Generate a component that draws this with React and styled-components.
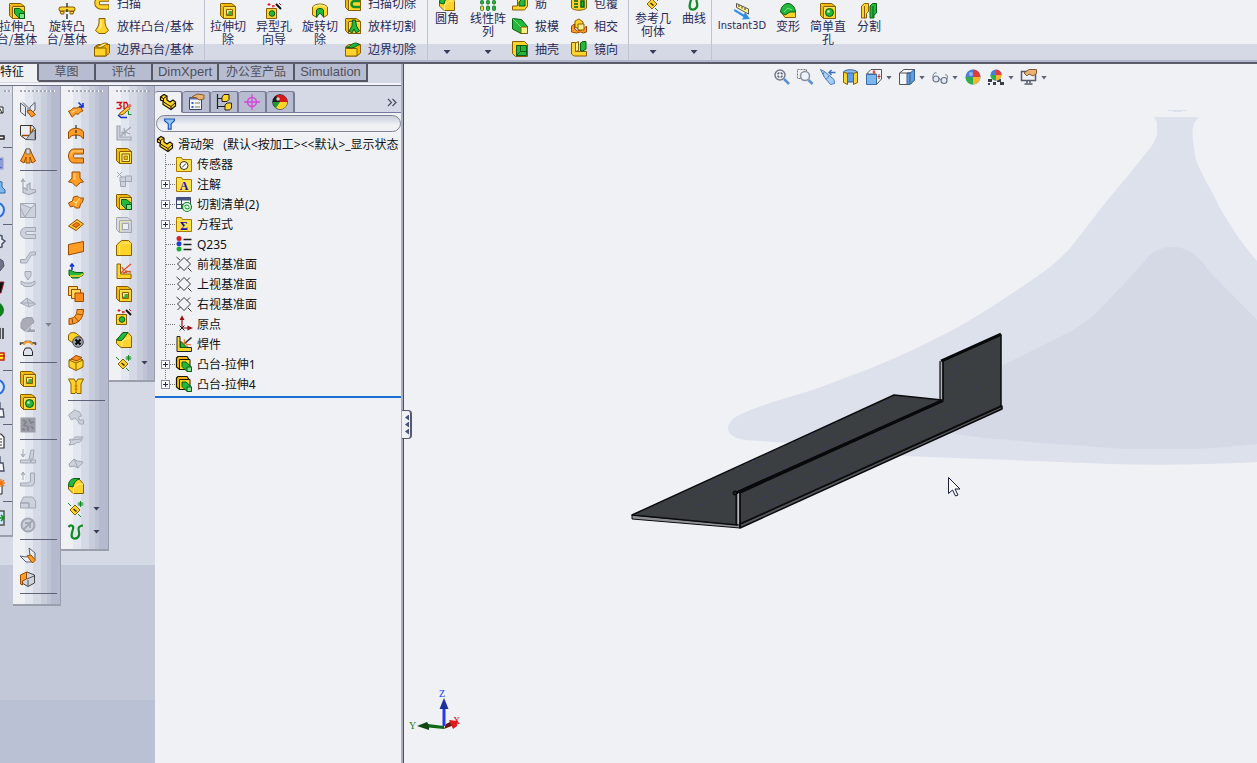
import React, { useState } from 'react';
import styled, { createGlobalStyle, css } from 'styled-components';

// ================= ICONS =================

const Y = '#ffd42a';
const YL = '#fff08a';
const YD = '#f2b705';
const YS = '#8a5e00';
const O = '#ff9d26';
const OL = '#ffc46a';
const OS = '#9a4b00';
const G = '#22b83a';
const GL = '#7fe08a';
const GS = '#0a5c18';
const GR = '#cdd1dc';
const GRS = '#a3a7b4';

const plate = (inner, fill = Y, side = YD, stroke = YS) => (
  <>
    <path d="M.5.5h11l4 3v12h-12l-3-3z" fill={side} stroke={stroke} />
    <path d="M3.500 3.500h12v12h-12z" fill={fill} stroke={stroke} />
    <path d="M.5.5l3 3M4.500 14.500v-10h10" fill="none" stroke={YL} strokeWidth=".8" opacity=".8" />
    {inner}
  </>
);

const icons = {
  boss: plate(
    <>
      <path d="M5.500 5.500h5l5 4v6h-5l-5-5z" fill={G} stroke={GS} />
      <path d="M10.500 10.500h5v5h-5z" fill={GL} stroke={GS} />
    </>
  ),
  revolve: (
    <>
      <path d="M2 6h12" stroke={YS} strokeWidth="5" strokeLinecap="round" />
      <path d="M2 6h12" stroke={Y} strokeWidth="3" strokeLinecap="round" />
      <path d="M1 8.500h4V11H2zM11 8.500h4L14 11h-3z" fill={Y} stroke={YS} />
      <path d="M8 0v4M8 6v3M8 11v5" stroke="#111" strokeWidth="1.200" />
    </>
  ),
  sweep: (
    <>
      <path d="M15 4H7a4 4 0 000 8h8" fill="none" stroke={YS} strokeWidth="5.500" />
      <path d="M14.500 4H7a4 4 0 000 8h7.500" fill="none" stroke={Y} strokeWidth="3.500" />
      <path d="M14 3.500H7" fill="none" stroke={YL} />
    </>
  ),
  loft: (
    <>
      <path d="M5 .5h6V5l1 3.500 2.500 4L11 15.500H5L1.500 12.500 4 8.500 5 5z" fill={Y} stroke={YS} />
      <path d="M7 2v5l-2 5" stroke={YL} strokeWidth="1.500" fill="none" />
    </>
  ),
  boundary: (
    <>
      <path d="M.5 6L4 3.500h11.500V12L12 15H.5z" fill={YD} stroke={YS} />
      <path d="M.5 7H12v8H.5z" fill={Y} stroke={YS} />
      <path d="M2 5c4 1 5-3 10-3l2 1c-4 1-4 3-9 4z" fill={YL} stroke={YS} />
    </>
  ),
  cut: plate(
    <>
      <path d="M6.500 6.500h6v6h-6z" fill={YL} stroke={YS} />
      <path d="M8.500 8h3.500v4H7v-1.500h1.500z" fill="#3fae3a" />
    </>
  ),
  wizard: (
    <>
      <path d="M.5 5.500h10V15.500H.5z" fill={Y} stroke={YS} />
      <circle cx="6" cy="10.500" r="2.800" fill={G} stroke={GS} />
      <path d="M10 1l5 5" stroke="#111" strokeWidth="2" />
      <path d="M3 0v3M1.500 1.500h3M7 2v2.500M6 3h3M13 0l2 2" stroke="#e01010" />
    </>
  ),
  revCut: (
    <>
      <path d="M.5 4c3-4 12-4 15 0v8l-4 2.500V9H5v5.500L.5 12z" fill={Y} stroke={YS} />
      <path d="M2 4c3-2.500 9-2.500 12 0" fill="none" stroke={YL} strokeWidth="1.500" />
      <path d="M4.500 14V7c1-2 6-2 7 0v7L8 10z" fill={G} stroke={GS} />
    </>
  ),
  sweepCut: plate(<path d="M15 6H9.500a3 3 0 000 6H15" fill="none" stroke="#0f8f26" strokeWidth="2.500" />),
  loftCut: plate(<path d="M7.500 2h3l1 6 3 5-3.500 2L9 11l-2 4-3-2 3-5z" fill={G} stroke={GS} />),
  boundCut: (
    <>
      <path d="M.5 6L4 3.500h11.500V12L12 15H.5z" fill={YD} stroke={YS} />
      <path d="M.5 7.500H12V15H.5z" fill={Y} stroke={YS} />
      <path d="M1 6c4 1 5-4 10-4l4 1.500c-4 1-4 3-9 3.500z" fill={G} stroke={GS} />
    </>
  ),
  fillet: (
    <>
      <path d="M.5 7L5 1h6l4.500 5v9.500H5L.5 11z" fill={Y} stroke={YS} />
      <path d="M.5 8C.5 3 3 .5 7 .5h5C8 2 5.500 5 5 9z" fill={G} stroke={GS} />
      <path d="M5.500 15.500V9.500L11 6h4.500" fill="none" stroke={YL} />
    </>
  ),
  pattern: (
    <g stroke={GS} strokeWidth=".7">
      {[0, 6, 12].map((x) => (
        <React.Fragment key={x}>
          <rect x={x + 0.5} y=".5" width="3" height="3.500" rx="1" fill={G} />
          <rect x={x + 0.5} y="5.500" width="3" height="3.500" rx="1" fill={G} />
          <rect x={x + 0.5} y="11" width="3" height="4.500" rx="1" fill={x === 0 ? Y : G} />
        </React.Fragment>
      ))}
    </g>
  ),
  rib: (
    <>
      <path d="M5.500 1h10v10l-3 4H.5v-4h5z" fill={Y} stroke={YS} />
      <path d="M7 11V7l6-6v10z" fill={G} stroke={GS} />
    </>
  ),
  draft: (
    <>
      <path d="M.5.5l9 1 6 7v7H9L.5 11z" fill={G} stroke={GS} />
      <path d="M.5.500L9 9" stroke={GL} />
      <path d="M9 9h6.500v6.500H9z" fill={YL} stroke={YS} />
    </>
  ),
  shell: (
    <>
      <path d="M.5.5h12l3 3v12H3.500l-3-3z" fill={Y} stroke={YS} />
      <path d="M4.500 4.500h10v10h-10z" fill={G} stroke={GS} />
      <path d="M4.500 14.500l4-4v-6M8.500 10.500h6" stroke={GS} fill="none" />
    </>
  ),
  wrap: (
    <>
      <path d="M.5 3c3-3 12-3 15 0v10c-3 3-12 3-15 0z" fill={Y} stroke={YS} />
      <path d="M3 6h4M3 9h4M3 12h4M10 6v6h3V6z" stroke={GS} strokeWidth="1.500" fill={G} />
    </>
  ),
  intersect: (
    <>
      <path d="M4 3l4-2 4 3v5l-4 2-4-2z" fill={Y} stroke={YS} />
      <path d="M.5 8l3-2v5l3 2 6-2 3-3v6l-3 1-3-1-4 1-5-1z" fill={O} stroke={OS} />
      <path d="M7 6h6v6H7z" fill={YL} stroke={YS} />
    </>
  ),
  mirror: (
    <>
      <path d="M.5 1.500h4v9h11v4.500H3L.5 13z" fill={Y} stroke={YS} />
      <path d="M4.500 2l3-1.500v9l-3 1z" fill={YL} stroke={YS} />
      <path d="M9.500 2L12 .5h3V8l-3 2H9.500z" fill={G} stroke={GS} />
    </>
  ),
  refGeom: (
    <>
      <path d="M7 4l5 5-5 5-5-5z" fill={Y} stroke={YS} />
      <path d="M0 2l3 3M10 13l3 3M12.500 0v6M9.500 3h6M10.500 1l4 4M14.500 1l-4 4" stroke="#158a25" />
      <path d="M5.500 8l3 2.500" stroke="#3a2a00" strokeWidth="1.500" />
    </>
  ),
  curve: (
    <path
      d="M.5 3C3 0 6 2 5 5S2 14 6 14.500s6-3 5-6.500-1-6 4-6.500"
      fill="none"
      stroke="#0f8a25"
      strokeWidth="2.200"
    />
  ),
  instant: (
    <>
      <path d="M2.500.5l12 5.500v5L2.500 4.500z" fill={YL} stroke="#333" strokeWidth=".8" />
      <path d="M5 2v2M8 3.500v2M11 5v2" stroke="#333" />
      <path d="M.5 6l9.500 5.500 1-2.500 5 7-8 .5 1.500-2.500L0 8z" fill="#2f8fe8" />
    </>
  ),
  deform: (
    <>
      <path d="M.5 8.500h15v6H5z" fill={Y} stroke={YS} />
      <path d="M.5 9C1 3 5 .5 8 .5S15 3 15.500 9H10l-5 3z" fill={G} stroke={GS} />
      <path d="M4 9l4-4 4 2" fill="none" stroke={GL} />
    </>
  ),
  hole: plate(
    <>
      <circle cx="9.500" cy="9.500" r="4" fill={G} stroke={GS} />
      <circle cx="8.500" cy="8.500" r="1.300" fill="#d5f5c8" />
    </>
  ),
  split: (
    <>
      <path d="M.5 3l3-2.500h4v8l-2 2V15H.5z" fill={Y} stroke={YS} />
      <path d="M3.500 3v12" stroke={YS} />
      <path d="M9 3l2.500-2.500h4V10L13 12v3H9z" fill={G} stroke={GS} />
      <path d="M12 3v11" stroke={GS} />
    </>
  ),

  // weldment and sheet metal rail
  sketchBend: (
    <>
      <path d="M.5 1l5 4v9l-5-4zM15 .5L10 5v7l5-4z" fill="#e8eaf0" stroke="#555a66" />
      <path d="M3 .5l5 5v6" stroke="#555a66" fill="none" />
      <path d="M7 9l4-1 4.500 4.500-4 2.500z" fill={O} stroke={OS} />
    </>
  ),
  convert: (
    <>
      <path d="M.5.5h12l3 4v10H6l-5.500-4z" fill="#eceef3" stroke="#333" />
      <path d="M2 10.500h8.500V1M10.500 10.500l3-7" stroke={OS} strokeWidth="1.500" fill="none" />
      <path d="M11 8l4-3v10L6 14.500z" fill="#b9bdca" stroke="#555" strokeWidth=".8" />
    </>
  ),
  lofted: (
    <>
      <path d="M6 1h4l2 5 3.500 7-3.500 2-2-6V15l-4 0V9l-2 6-3.500-2L4 6z" fill={O} stroke={OS} />
      <path d="M6 1h4v5H6z" fill="#d6d9e2" stroke="#666" strokeWidth=".8" />
    </>
  ),
  gFlange: <path d="M3 0v10M1 3l2-3 2 3M3 8l4 3V6l3-2v6l5.500 1v2L9 15.500l-6-2z" fill={GR} stroke={GRS} strokeWidth="1.200" />,
  gMiter: <path d="M.5 1.500h15v14H5L.5 6zM.5 6v9.500h4M.5 1.500L11 6l4.500-4M4.500 15.500L11 6" fill={GR} stroke={GRS} />,
  gHem: <path d="M15.500 2.500H6a5 5 0 000 11h9.500v-4H7a1.500 1.500 0 010-3h8.500z" fill={GR} stroke={GRS} />,
  gJog: <path d="M.5 11.500h5l5-7.500h5v3h-4l-5 8H.5z" fill={GR} stroke={GRS} />,
  gBend: <path d="M5 .5h6v4L8 9 5 4.500zM1 10l4 2h6l4-2v3l-4 2.500H5L1 13z" fill={GR} stroke={GRS} />,
  gFold: <path d="M.5 9L7 4l8.500 6-6.500 3zM7 4l2 9M.5 9h14" fill={GR} stroke={GRS} />,
  gBreak: (
    <>
      <path d="M3 2l4-1.500h5L14 5l-8 10-5-4V6z" fill="#a9acb6" stroke="#9a9da9" />
      <path d="M5 15.500L13 7l-2 5h4.500v3.500z" fill="#9fa2ad" stroke="#e0e2ea" />
    </>
  ),
  forming: (
    <>
      <path d="M.5 5V3h4l1-1.500h5l1 1.500h4v2" fill="none" stroke="#444" strokeWidth="1.500" />
      <path d="M4 5c0-4 8-4 8 0" fill="none" stroke={O} strokeWidth="2" />
      <path d="M5.500 8h5l2 3.500v4h-9v-4z" fill="#dfe2ea" stroke="#222" />
    </>
  ),
  gVent: (
    <>
      <path d="M.5.5h15v15H.5z" fill="#9b9da6" />
      <path d="M3 3l3 2-2 3 3 1M9 2l2 4 3-1M8 9v5M11 9l3 3M2 12l3 1" stroke="#7e808a" strokeWidth="1.500" fill="none" />
    </>
  ),
  gUnfold: <path d="M3 1v8M1 6l2 3 2-3M.5 12h10v3H.5zM9 11l2-9h3l-1 9zM11 12h4.500v3H11z" fill={GR} stroke={GRS} />,
  gRefold: <path d="M3 9V1M1 4l2-3 2 3M.5 12h8l2-2V2h4v10l-2 3H.5z" fill={GR} stroke={GRS} />,
  gFlat: <path d="M.5 9l3-6h9l3 4v7H9V9zM.5 9H9v5H.5z" fill={GR} stroke={GRS} />,
  gNoBend: (
    <>
      <circle cx="8" cy="8" r="6.500" fill={GR} stroke={GRS} strokeWidth="2" />
      <path d="M3.500 12.500l9-9M5 6h5v5" stroke={GRS} strokeWidth="1.800" fill="none" />
    </>
  ),
  rip: (
    <>
      <path d="M9 0l1 7-4 2-6-1 6 6h5l4-3V5z" fill="#eceef3" stroke="#5a5e6a" />
      <path d="M7 8l4-1 4.500 5-3 3z" fill={O} stroke={OS} />
    </>
  ),
  insBend: (
    <>
      <path d="M2 5l5-4 7.500 3v8L8 15.500 2 12z" fill="#cfd3de" stroke="#444" />
      <path d="M.5 4l6-3v7l-4 2v4l-2-1z" fill={O} stroke={OS} />
      <path d="M7 8l7-3M8 15V9" stroke="#555" />
    </>
  ),

  // surface rail
  sExtrude: (
    <>
      <path d="M.5 9C4 9 4 5 7 6s4-2 5-2l3 5c-4 0-3 4-6 3s-3 3-5 3z" fill={O} stroke={OS} />
      <path d="M3 10.500c3 0 3-3 6-2.500" stroke={OL} strokeWidth="1.500" />
      <path d="M10.500.5l4 4M15 1v4h-4" stroke="#1030d0" strokeWidth="1.500" />
    </>
  ),
  sRevolve: (
    <>
      <path d="M.5 14V7c3-5 12-5 15 0v7c-2-3-4-4-7.500-4S2.500 11 .5 14z" fill={O} stroke={OS} />
      <path d="M8 0v3M8 5v3M8 10v4" stroke="#111" />
    </>
  ),
  sSweep: (
    <>
      <path d="M15.500 1H6C3 1 .5 4 .5 8S3 15 6 15h9.500v-5H7c-2 0-2-4 0-4h8.500z" fill={O} stroke={OS} />
      <path d="M15 3H6.500C4 3 3 5 3 8" fill="none" stroke={OL} strokeWidth="1.500" />
    </>
  ),
  sLoft: (
    <>
      <path d="M4 1h8v6l3.500 4-3 .5L8 15.500 4 11.500.5 11 4 7z" fill={O} stroke={OS} />
      <path d="M6.500 2v7" stroke={OL} strokeWidth="2" />
    </>
  ),
  sBoundary: (
    <>
      <path d="M.5 9l4-2 1-4 4-1 2 2h4l-1 4-2 2-1 4-4 0-2-2-3 1z" fill={O} stroke={OS} />
      <path d="M5 7l3 2 4-5M7 12l2-3" stroke={YL} />
    </>
  ),
  sFill: (
    <>
      <path d="M9 2.500L15.500 7 8 13.500.5 9z" fill="#ffc640" stroke={OS} />
      <path d="M8.500 5.500L12 7.500 8 10.500 4.500 8.500z" fill="#ff7a00" stroke={OS} />
    </>
  ),
  sPlanar: <path d="M.5 4.500l15-3v10l-15 3.500z" fill={O} stroke={OS} />,
  sOffset: (
    <>
      <path d="M1 12V7c3 0 4 2.500 8 2.500h6V12l-5 3H4z" fill={G} stroke={GS} />
      <path d="M2 13h10l3-2" stroke={Y} strokeWidth="1.500" />
      <path d="M4 7V1M2 3.500L4 1l2 2.500" stroke="#1030d0" strokeWidth="1.500" fill="none" />
    </>
  ),
  sRuled: (
    <>
      <path d="M.5.5h9v9h-9z" fill="#ffd85a" stroke={OS} />
      <path d="M3.500 3.500h9v9h-9z" fill="#ffd85a" stroke={OS} />
      <path d="M7 7h8.500v8.500H7z" fill="#ff8a1e" stroke={OS} />
    </>
  ),
  sElbow: (
    <>
      <path d="M9 .5h6.500C15.500 9 11 15 1 15.500v-6c5 0 8-3 8-9z" fill={O} stroke={OS} />
      <path d="M9 5l6 1M7 8l4 5M4 9.500l1 5.500" stroke={OS} />
    </>
  ),
  sDelete: (
    <>
      <path d="M.5 4C1-.5 7 0 9 2l5 4-6 7L.5 8z" fill={Y} stroke={YS} />
      <circle cx="10" cy="10" r="5.300" fill="#9c9faa" stroke="#444" />
      <path d="M7.500 7.500l5 5M12.500 7.500l-5 5" stroke="#000" strokeWidth="2" />
    </>
  ),
  sReplace: (
    <>
      <path d="M1 5l7-3 7 3v7l-7 3.500L1 12z" fill={Y} stroke={YS} />
      <path d="M1 5l7 3 7-3M8 8v7" stroke={YS} fill="none" />
      <path d="M3 4l5-3.500 6 2L9 6z" fill="#ff8a1e" stroke={OS} />
    </>
  ),
  sUntrim: (
    <>
      <path d="M.5 1h5.500l2 3 2-3h5.500l-2.500 5v9.500h-4L8 14l-1 1.500H3V6z" fill={Y} stroke={YS} />
      <path d="M8 4v10M6.500 8h3M6.500 11h3" stroke="#c06000" />
    </>
  ),
  gExtend: <path d="M.5 6l6-5 5 2 2 4-3 1 1 3h4v4h-4l-2-4-3-2-3 2z" fill={GR} stroke={GRS} />,
  gTrim: <path d="M1 8c3-2 4 1 6-3l8 0-2 4c-2 3-4 0-6 3l-6 1 2-4zM4 8l9-1" fill={GR} stroke={GRS} />,
  gKnit: <path d="M1 9l5-5 3 2 6 1-5 6-4-2-4 1zM6 4l4 9" fill={GR} stroke={GRS} />,

  // 3D rail
  sk3d: (
    <>
      <path d="M.5.500h5L3.500 3l2 1.500-1.500 2H.5M8 .5v6h2l2-3-1.500-3z" fill="none" stroke="#d01010" strokeWidth="1.300" />
      <path d="M4 11l8-6.500 2 2L7 12.500l-4 .5z" fill="#ffc640" stroke={YS} />
      <path d="M12.500 4.500l2.500-1.500" stroke="#e07060" strokeWidth="3" />
      <path d="M2 13l3 2.500h6" stroke="#1030d0" strokeWidth="1.500" fill="none" />
      <path d="M12 12.500h3.500M12.500 9v4" stroke="#109020" />
    </>
  ),
  gWeld: <path d="M1 1h3v11h11v3H1zM5 11l4-4 6-5M8 3l1 4-4 1M9 7l5 2M9 7v4" fill={GR} stroke={GRS} strokeWidth="1.200" />,
  member: plate(
    <>
      <path d="M6 6h7.500v7.500H6z" fill={YL} stroke={YS} />
      <path d="M8 8h3.500v3.500H8z" fill={YD} stroke={YS} strokeWidth=".7" />
    </>
  ),
  gTrimEx: <path d="M1 1l5 5M6 1L1 6M4 6h5.500v4.500H4zM9.500 5h6v5.500h-6zM4.500 10.500h5v5h-5z" fill={GR} stroke={GRS} />,
  gCap: plate(<path d="M6.500 6.500h6v6h-6z" fill="#eceef3" stroke={GRS} />, GR, '#d9dce5', GRS),
  gusset: (
    <>
      <path d="M.5 5l5-4.500h7l3 3v12H.5z" fill={Y} stroke={YS} />
      <path d="M3.500 15V6l3-3h8" stroke={YL} fill="none" />
    </>
  ),
  weldBead: (
    <>
      <path d="M1 1h3.500v10H15v4.500H1z" fill={Y} stroke={YS} />
      <path d="M5 10l4-4 6-5M6 4l2 4M9 8l6 1M7 10l4-1" stroke="#e05020" strokeWidth="1.300" />
    </>
  ),
  chamfer: (
    <>
      <path d="M.5 8L7 .5h5l3.500 4v11H5l-4.500-4z" fill={Y} stroke={YS} />
      <path d="M.5 8L7 .5h5L6 8.500z" fill={G} stroke={GS} />
      <path d="M6 9l6-3h3M6 9v6" stroke={YL} fill="none" />
    </>
  ),

  // clipped outer rail
  sphere: <circle cx="8" cy="8" r="7" fill="#d5e6fb" stroke="#2b6fd6" strokeWidth="2" />,
  mesh: <path d="M1 5h13v6H1zM4 5l3 6M10 5l3 6M7 11l3-6" fill="#fff" stroke="#222" />,
  bar: <path d="M0 11h15v3H0" fill="#fff" stroke="#222" strokeWidth="1.500" />,
  monitor: <path d="M1 2h13v11H1zM12 4v7" fill="#4a68d8" stroke="#a5aed2" strokeWidth="1.500" />,
  user: <path d="M8 2l5 1v5l3 3v3H2v-3z" fill="#7fb6ee" stroke="#2d6aa8" />,
  gear: <path d="M8 1l5 2v3l3 2-3 3v3l-5 1-5-2V4z" fill="#e8eaf2" stroke="#4a4e66" strokeWidth="1.500" />,
  dark: <path d="M8 1l6 4 1 5-4 5H4z" fill="#707288" stroke="#55576a" />,
  blade: <path d="M2 3h13l-3 11H4z" fill="#111" stroke="#a02030" />,
  leaf: <circle cx="7.500" cy="8" r="7.500" fill="#0e8020" />,
  mark: <path d="M3 14V3l4 8 4-8v11M14 3v11" fill="none" stroke="#111" strokeWidth="1.300" />,
  yellow: <path d="M1 5h14v7H1zM8 8h8" fill="#ffee22" stroke="#c02010" strokeWidth="1.400" />,
  printer: <path d="M5 1h6v6h3l1 8H2V7h3z" fill="#f4f5f9" stroke="#4a4e66" strokeWidth="1.300" />,
  doc: <path d="M3 1h9l3 3v11H3zM5 6h8M5 9h8M5 12h8" fill="#fff" stroke="#333" strokeWidth="1.200" />,
  spark: (
    <>
      <path d="M3 5h10v10H3z" fill="#fff" stroke="#222" />
      <path d="M12 0v8M8 4h8M9 1l6 6M15 1L9 7" stroke="#f07a10" strokeWidth="1.400" />
    </>
  ),
  greenDoc: (
    <>
      <path d="M3 1h12v14H3z" fill="#cfe8f8" stroke="#555" strokeWidth="1.500" />
      <path d="M9 8h6M12 5l3 3-3 3" stroke="#109020" strokeWidth="1.500" fill="none" />
    </>
  ),

  // feature manager
  part: (
    <>
      <path d="M.5 3L4 .5l3 1.500v4l3 2 3-2 2.500 2v4L11 15.500l-8-5V7L.5 6z" fill={Y} stroke="#1a1400" strokeWidth="1.200" />
      <path d="M.5 3l3 1.500L7 2M3.500 4.500V8l7.500 4.500 4.500-4M11 12.500v3" fill="none" stroke="#1a1400" />
    </>
  ),
  props: (
    <>
      <path d="M1.500 3.500h12v12h-12z" fill="#f5f6fa" stroke="#3b4468" />
      <path d="M1.500 3.500h12v2h-12z" fill="#5d6fae" />
      <path d="M3.500 8h2v2h-2zM3.500 12h2v2h-2z" fill="#3a5fc0" />
      <path d="M7 9h5M7 13h5" stroke="#777" />
      <path d="M4 3l5-3 7 1v4l-5 1-2-2z" fill="#e7b375" stroke="#8c5a28" />
    </>
  ),
  config: (
    <>
      <path d="M1.500 0v15M1.500 4.500H7M1.500 12.500H9" stroke="#222" strokeWidth="1.200" />
      <path d="M6 3l2-2.500h5v5l-2 2H6zM9 11l2-2h4.500v5l-2 2H9z" fill={Y} stroke="#222" />
    </>
  ),
  dimx: (
    <>
      <circle cx="8" cy="8" r="4.500" fill="none" stroke="#d24bd8" strokeWidth="1.500" />
      <path d="M8 0v16M0 8h16" stroke="#d24bd8" strokeWidth="1.300" />
    </>
  ),
  ball: (
    <>
      <circle cx="8" cy="8" r="7.300" fill="#2a48b8" stroke="#333" />
      <path d="M8 8V.7A7.300 7.300 0 00.7 8z" fill="#1a1a1a" />
      <path d="M8 8L4 1.800A7.300 7.300 0 018 .7a7.300 7.300 0 017.300 7.300z" fill="#d81818" />
      <path d="M8 8H.8A7.300 7.300 0 008 15.300z" fill="#1c9a34" />
      <path d="M8 8h7.300A7.300 7.300 0 018 15.300L4 14z" fill="#ffd42a" />
      <circle cx="6" cy="5" r="1.800" fill="#fff" opacity=".75" />
    </>
  ),
  funnel: (
    <path d="M2 2.500h12v2L10 8.500V15H6.500V8.500L2 4.500z" fill="#8fc4f5" stroke="#1a50b8" strokeWidth="1.400" />
  ),
  sensor: (
    <>
      <path d="M.5 3.500V1.500h5l1 2h9v12H.5z" fill="#ffe14a" stroke="#a87800" />
      <circle cx="8" cy="9.500" r="4" fill="#fff" stroke="#333" />
      <path d="M6 11.500l4-4" stroke="#333" />
    </>
  ),
  cutlist: (
    <>
      <path d="M.5 1.500h14v11H.5z" fill="#f5f6fa" stroke="#3b4468" />
      <path d="M.5 1.500h14v3H.5z" fill="#45557f" />
      <path d="M.5 8.500h14M5.500 4v8" stroke="#3b4468" />
      <circle cx="11" cy="11" r="4.500" fill="#dff5df" stroke="#0f8a25" strokeWidth="1.200" />
      <path d="M8.500 10.500c1-2 3-2 4.500 0M13.500 11.500c-1 2-3 2-4.500 0" fill="none" stroke="#0f8a25" strokeWidth="1.200" />
    </>
  ),
  material: (
    <>
      <circle cx="3" cy="2.500" r="2.500" fill="#d82020" />
      <circle cx="3" cy="7.800" r="2.500" fill="#2040d0" />
      <circle cx="3" cy="13" r="2.500" fill="#18b030" />
      <path d="M7.500 3.500h8M7.500 8.500h8M7.500 13.500h8" stroke="#222" strokeWidth="1.500" />
    </>
  ),
  plane: (
    <path d="M8 1.500l6.500 6.500L8 14.500 1.500 8zM.5 1l3.500 3M12 12l3.500 3.500M11 4.500L14 1.500M4.500 11l-3 3" fill="none" stroke="#222" strokeWidth=".9" />
  ),
  origin: (
    <>
      <path d="M6 12V2M6 12h8M4.500 3.500L6 .5l1.500 3zM12 10.500l3.500 1.500-3.500 1.500z" stroke="#a01010" fill="#a01010" strokeWidth="1.200" />
      <path d="M3.500 9.500l5 5M8.500 9.500l-5 5" stroke="#222" />
    </>
  ),
  weldment: (
    <>
      <path d="M1 .5h3v11h11.500v4H1z" fill={Y} stroke="#222" />
      <path d="M4.500 5l6.500 6.500H4.500z" fill={G} stroke={GS} />
      <path d="M8 8l7.500-6.500" stroke="#222" strokeWidth="1.500" />
      <path d="M8 3l1 4M15 9l-5-1M6 6l3 2M12 11l-2-3" stroke="#f07020" />
    </>
  ),
  extrude: (
    <>
      <path d="M.5 2L2 .5h9L13 3.500v10H3.500L.5 11z" fill={YD} stroke="#1a1400" strokeWidth="1.200" />
      <path d="M3.500 3.500H14v10H3.500z" fill={Y} stroke="#1a1400" />
      <path d="M6 6h4l5.500 5v4.500H11L6 10.500z" fill={G} stroke={GS} />
      <path d="M11 11h4.500v4.500H11z" fill={GL} stroke={GS} />
    </>
  ),

  // view toolbar
  zoomFit: (
    <>
      <circle cx="6" cy="6" r="5" fill="#eef3fb" stroke="#777b88" strokeWidth="1.500" />
      <path d="M4 5.500V4h1.500M6.500 4H8v1.500M8 6.500V8H6.500M5.500 8H4V6.500" stroke="#333" fill="none" />
      <path d="M10 10l5 5" stroke="#5b8fd0" strokeWidth="2.500" />
    </>
  ),
  zoomArea: (
    <>
      <path d="M.5.5h9v9h-9z" fill="none" stroke="#777" strokeDasharray="2 1" />
      <circle cx="8" cy="7" r="4.500" fill="#eef3fb" stroke="#8a8e9a" strokeWidth="1.500" />
      <path d="M11.500 11l4 4" stroke="#5b8fd0" strokeWidth="2.500" />
    </>
  ),
  prevView: (
    <>
      <path d="M.5.5l4 2L14 10.500l.5 4-4 1-6-7z" fill="#a9cdf2" stroke="#4a7cb8" />
      <path d="M4.500 2.500l-1.500 3M9 7l-3 3.500" stroke="#4a7cb8" />
      <path d="M15.500 3.500H9M11.500 1L9 3.500 11.500 6" stroke="#3a6fc0" strokeWidth="1.400" fill="none" />
    </>
  ),
  section: (
    <>
      <path d="M.5 3c2-3 11-3 14 0l-3 2H4z" fill="#8fbdf0" stroke="#34629c" />
      <path d="M4.500 4h6v9h-6z" fill="#5f9ee6" stroke="#34629c" />
      <path d="M.5 3l4 1.500v11l-4-2zM10.500 4.500l4-1.500v10.500l-4 2z" fill={Y} stroke={YS} />
    </>
  ),
  orient: (
    <>
      <path d="M5 .5h10.500V10l-5 5.500V5H.5z" fill="#f4f6fa" stroke="#555" />
      <path d="M.5 5.500h10v10H.5z" fill="#7db5ee" stroke="#3a6ca8" />
      <path d="M8 1v4M13 5v5M11.500 7.500h3M6.500 3h3" stroke="#d02020" />
    </>
  ),
  display: (
    <>
      <path d="M.5 4L5 .5h10.500V11L11 15.500H.5z" fill="#f4f6fa" stroke="#555" />
      <path d="M8 4h3l4.500-3.500V11L11 15.500H8z" fill="#5f9ee6" stroke="#34629c" />
      <path d="M.5 4H11v11" fill="none" stroke="#555" />
    </>
  ),
  glasses: (
    <>
      <circle cx="4" cy="10" r="3" fill="#dfe9f6" stroke="#6b7385" strokeWidth="1.200" />
      <circle cx="12" cy="11.500" r="3" fill="#dfe9f6" stroke="#6b7385" strokeWidth="1.200" />
      <path d="M7 9.500l2 1M1 9C.5 5 3 3 4.500 4M15 10c1-3 0-5-2-4" stroke="#6b7385" fill="none" />
    </>
  ),
  appearance: (
    <>
      <circle cx="8" cy="8" r="7.500" fill="#4a7fd8" />
      <path d="M8 8V.5A7.500 7.500 0 0115.500 8z" fill="#e03c3c" />
      <path d="M8 8h7.500A7.500 7.500 0 018 15.500z" fill="#f5b52e" />
      <path d="M8 8v7.500A7.500 7.500 0 01.5 8z" fill="#2eae4c" />
      <circle cx="6" cy="5" r="2" fill="#fff" opacity=".45" />
    </>
  ),
  scene: (
    <>
      <path d="M0 10h4v3H0zM5 13h3v3H5zM9 10h4v3H9zM12 13h4v3h-4zM0 14h2v2H0z" fill="#3a3d4a" />
      <circle cx="8" cy="6" r="5.500" fill="#4a7fd8" />
      <path d="M8 6V.5A5.500 5.500 0 0113.500 6z" fill="#e03c3c" />
      <path d="M8 6h5.500A5.500 5.500 0 018 11.500z" fill="#f5b52e" />
      <path d="M8 6v5.500A5.500 5.500 0 012.500 6z" fill="#2eae4c" />
    </>
  ),
  viewSet: (
    <>
      <path d="M.5 2.500h14v9H.5z" fill="#eef1f7" stroke="#555a68" strokeWidth="1.500" />
      <path d="M6 12v2M9 12v2M3.500 15h8" stroke="#555a68" strokeWidth="1.500" />
      <path d="M3 4l5-3.500h7.500v4L12 7l-4-2-2 2z" fill="#e7b375" stroke="#8c5a28" />
    </>
  ),
};

const folderWith = (letter) => (
  <>
    <path d="M.5 3.500V1.500h5l1 2h9v12H.5z" fill="#ffe14a" stroke="#a87800" />
    <text x="8" y="14" textAnchor="middle" fontFamily="Liberation Serif, serif" fontWeight="bold" fontSize="12" fill="#1515a8">
      {letter}
    </text>
  </>
);
icons.annotation = folderWith('A');
icons.equation = folderWith('Σ');

const IconSvg = styled.svg`
  display: block;
  flex: none;
  width: 16px;
  height: 16px;
  overflow: visible;
`;

const Icon = ({ name }) => (
  <IconSvg viewBox="0 0 16 16" fill="none" aria-hidden="true">
    {icons[name]}
  </IconSvg>
);

// ================= STYLES =================

const GlobalStyle = createGlobalStyle`
  * { box-sizing: border-box; }
  html, body, #root { height: 100%; }
  body {
    margin: 0;
    overflow: hidden;
    font-family: "Noto Sans", "Noto Sans CJK SC", sans-serif;
    font-size: 12px;
    color: #111;
    background: #eff1f5;
  }
  button {
    margin: 0;
    padding: 0;
    border: 0;
    background: none;
    color: inherit;
    font: inherit;
  }
`;

const Window = styled.div`
  display: flex;
  flex-direction: column;
  height: 100vh;
`;

const Ribbon = styled.header`
  display: flex;
  flex: none;
  height: 64px;
  overflow: hidden;
  border-bottom: 2px solid #5a5c6a;
  background: linear-gradient(#eff1f5 44px, #d5d9e5 44px, #d5d9e5 60px, #b2b8cc 60px);
  color: #2a2a58;
`;

const Group = styled.div`
  display: flex;
  flex: none;
  height: 60px;

  & + & {
    border-left: 1px solid #c0c4d0;
  }

  &:first-child {
    margin-left: -8px;
  }
`;

const Command = styled.button`
  display: flex;
  flex-direction: column;
  align-items: center;
  width: ${(p) => p.$width}px;
  padding-top: 3px;

  ${(p) =>
    p.$split &&
    css`
      height: 65px;
      margin-top: -5px;
      padding-top: 0;
      padding-bottom: 6px;
    `}
`;

const CommandLabel = styled.span`
  line-height: 13px;
  white-space: pre;
  text-align: center;
  font-family: ${(p) => (p.$latin ? '"DejaVu Sans Condensed", "DejaVu Sans"' : '"Noto Sans CJK SC"')}, sans-serif;
  font-size: ${(p) => (p.$latin ? 11 : 12)}px;
`;

const Arrow = styled.span`
  width: 7px;
  height: 4px;
  background: ${(p) => p.$color || '#3a3c5c'};
  clip-path: polygon(0 0, 100% 0, 50% 100%);
`;

const CommandArrow = styled(Arrow)`
  margin-top: auto;
`;

const Stack = styled.div`
  width: ${(p) => p.$width}px;
  margin-top: -9px;
  padding-left: 2px;
`;

const StackCommand = styled.button`
  display: flex;
  align-items: center;
  gap: 7px;
  height: 23px;
  font-family: "Noto Sans CJK SC", sans-serif;
  white-space: nowrap;
`;

const Body = styled.div`
  display: flex;
  flex: 1;
  min-height: 0;
`;

const SidePane = styled.aside`
  display: flex;
  flex-direction: column;
  flex: none;
  width: 401px;
  background: #d5d9e5;
`;

const Tabs = styled.nav`
  display: flex;
  flex: none;
  height: 22px;
  padding-bottom: 4px;
  border-bottom: 1px solid #6d7082;
  background: linear-gradient(#d5d9e5 19px, #f4f5f8 19px);
`;

const Tab = styled.button`
  width: ${(p) => p.$width}px;
  height: 18px;
  border: solid #565863;
  border-width: 0 2px 2px 0;
  background: #b7bcd0;
  color: #4e505c;
  line-height: 16px;
  font-family: "Liberation Sans", "Noto Sans CJK SC", sans-serif;
  font-size: ${(p) => (p.$latin ? 13 : 12)}px;

  ${(p) =>
    p.$active &&
    css`
      padding-right: 16px;
      border-bottom-color: #eff1f5;
      background: #eff1f5;
      color: #111;
      white-space: nowrap;
    `}
`;

const Workspace = styled.div`
  display: flex;
  align-items: flex-start;
  flex: 1;
  min-height: 0;
  background: linear-gradient(#d5d9e5 479px, #c3c8d9 479px, #c3c8d9 614px, #bbc1d4 614px);
`;

const Rail = styled.div`
  display: flex;
  flex-direction: column;
  flex: none;
  align-items: flex-start;
  width: ${(p) => p.$width}px;
  padding: 3px 0 6px 7px;
  border-right: 1px solid #9b9eab;
  border-bottom: 2px solid #9b9eab;
  background: linear-gradient(
    90deg,
    #eff1f5 12px,
    #e2e6ee 12px,
    #e2e6ee 20px,
    #d5d9e5 20px,
    #d5d9e5 28px,
    #c8cddc 28px,
    #c8cddc 34px,
    #bec3d5 34px,
    #bec3d5 38px,
    #b5bacf 38px
  );

  ${(p) =>
    p.$clipped &&
    css`
      align-items: flex-end;
      padding-left: 0;
      overflow: hidden;
      background: #d5d9e5;
    `}
`;

const Grip = styled.div`
  flex: none;
  width: calc(100% - 4px);
  height: 9px;
  background: repeating-linear-gradient(90deg, #a3a7b8 0 2px, #f6f7fa 2px 3px, transparent 3px 4px) no-repeat;
  background-size: 100% 2px;
  background-position: 0 1px;
`;

const RailRow = styled.div`
  display: flex;
  flex: none;
  align-items: center;
  gap: 9px;
  height: 23px;
  ${(p) => p.$clipped && 'padding-right: 7px;'}
`;

const RailRule = styled.hr`
  flex: none;
  width: calc(100% - 3px);
  height: 1px;
  margin: 3px 0 4px;
  border: 0;
  background: #5f6278;
`;

const Manager = styled.section`
  display: flex;
  flex: 1;
  flex-direction: column;
  align-self: stretch;
  min-width: 0;
  background: #eff1f5;
`;

const ManagerTabs = styled.div`
  display: flex;
  align-items: flex-end;
  flex: none;
  height: 27px;
  background: linear-gradient(#d5d9e5 26px, #7377a0 26px);
`;

const ManagerTab = styled.button`
  display: flex;
  align-items: center;
  justify-content: center;
  width: 28px;
  height: 22px;
  border: solid #777b96;
  border-width: 1px 2px 1px 0;
  border-radius: 3px 3px 0 0;
  background: #b7bcd0;

  ${(p) =>
    p.$active &&
    css`
      border-bottom-color: #eff1f5;
      background: #eff1f5;
    `}
`;

const MoreButton = styled.button`
  height: 22px;
  margin-left: auto;
  padding-right: 4px;
`;

const Filter = styled.label`
  display: flex;
  align-items: center;
  flex: none;
  gap: 4px;
  height: 17px;
  margin: 2px 0 2px 1px;
  padding-left: 6px;
  border: 1px solid #7f8398;
  border-radius: 9px;
  background: linear-gradient(#c9cedd, #eff1f5 60%);
  overflow: hidden;
`;

const FilterIcon = styled.span`
  display: flex;
  flex: none;
`;

const FilterInput = styled.input`
  flex: 1;
  min-width: 0;
  height: 13px;
  padding: 0;
  border: 0;
  outline: 0;
  background: transparent;
  font: inherit;
`;

const Tree = styled.ul`
  flex: none;
  margin: 0;
  padding: 0;
  list-style: none;
  overflow: hidden;
  border-bottom: 2px solid #1c6fd8;
`;

const RootRow = styled.li`
  display: flex;
  align-items: center;
  gap: 5px;
  height: 20px;
  padding-left: 2px;
  white-space: nowrap;
`;

const TreeRow = styled.li`
  display: grid;
  grid-template-columns: 21px 16px 1fr;
  align-items: center;
  height: 20px;
  white-space: nowrap;

  &:last-child {
    height: 22px;
    padding-bottom: 2px;
  }
`;

const Gutter = styled.span`
  display: flex;
  align-items: center;
  height: 20px;
  padding-left: 6px;
  background:
    repeating-linear-gradient(#777 0 1px, transparent 1px 2px) 10px 0 / 1px ${(p) => (p.$last ? '50%' : '100%')} no-repeat,
    repeating-linear-gradient(90deg, #777 0 1px, transparent 1px 2px) 11px 10px / 10px 1px no-repeat;
`;

const Expander = styled.button`
  width: 9px;
  height: 9px;
  border: 1px solid #8a8d9c;
  background:
    linear-gradient(#222c60, #222c60) center / 5px 1px no-repeat,
    linear-gradient(#222c60, #222c60) center / 1px 5px no-repeat,
    #f8f9fb;
`;

const TreeLabel = styled.span`
  padding: 2px 0 0 5px;
  line-height: 18px;
`;

const Splitter = styled.div`
  display: flex;
  flex: none;
  align-items: flex-start;
  width: 3px;
  border-left: 1px solid #a9adbc;
  background: linear-gradient(90deg, #a9adbc 1px, #4c4f60 1px);
  z-index: 1;
`;

const SplitHandle = styled.button`
  display: flex;
  flex: none;
  flex-direction: column;
  justify-content: space-around;
  align-items: flex-end;
  width: 10px;
  height: 29px;
  margin-top: 346px;
  padding: 3px 1px;
  border: solid #565a70;
  border-width: 1px 2px 1px 0;
  border-radius: 0 4px 4px 0;
  background: #eff1f5;
`;

const HandleArrow = styled.span`
  width: 4px;
  height: 6px;
  background: #44507e;
  clip-path: polygon(100% 0, 100% 100%, 0 50%);
`;

const Viewport = styled.main`
  display: grid;
  flex: 1;
  min-width: 0;
  min-height: 0;
`;

const Scene = styled.svg`
  grid-area: 1 / 1;
  display: block;
  width: 100%;
  height: 100%;
  min-height: 0;
`;

const ViewTools = styled.div`
  grid-area: 1 / 1;
  display: flex;
  align-self: start;
  padding: 1px 0 0 366px;
`;

const ViewTool = styled.button`
  display: flex;
  align-items: center;
  height: 23px;
  padding: 0 3px 0 4px;
`;

const ViewArrow = styled(Arrow)`
  width: 6px;
  margin: 2px 0 0 4px;
`;

// ================= DATA =================

const ribbon = [
  {
    big: [
      { icon: 'boss', label: '拉伸凸\n台/基体', width: 50 },
      { icon: 'revolve', label: '旋转凸\n台/基体', width: 50 },
    ],
    stacks: [{ width: 112, items: [['sweep', '扫描'], ['loft', '放样凸台/基体'], ['boundary', '边界凸台/基体']] }],
  },
  {
    big: [
      { icon: 'cut', label: '拉伸切\n除', width: 46 },
      { icon: 'wizard', label: '异型孔\n向导', width: 46 },
      { icon: 'revCut', label: '旋转切\n除', width: 46 },
    ],
    stacks: [{ width: 84, items: [['sweepCut', '扫描切除'], ['loftCut', '放样切割'], ['boundCut', '边界切除']] }],
  },
  {
    big: [
      { icon: 'fillet', label: '圆角', width: 38, split: true },
      { icon: 'pattern', label: '线性阵\n列', width: 44, split: true },
    ],
    stacks: [
      { width: 59, items: [['rib', '筋'], ['draft', '拔模'], ['shell', '抽壳']] },
      { width: 59, items: [['wrap', '包覆'], ['intersect', '相交'], ['mirror', '镜向']] },
    ],
  },
  {
    big: [
      { icon: 'refGeom', label: '参考几\n何体', width: 48, split: true },
      { icon: 'curve', label: '曲线', width: 34, split: true },
    ],
    stacks: [],
  },
  {
    big: [
      { icon: 'instant', label: 'Instant3D', width: 60, latin: true },
      { icon: 'deform', label: '变形', width: 32 },
      { icon: 'hole', label: '简单直\n孔', width: 48 },
      { icon: 'split', label: '分割', width: 34 },
    ],
    stacks: [],
  },
];

const tabs = [
  { label: '特征', width: 39 },
  { label: '草图', width: 57 },
  { label: '评估', width: 57 },
  { label: 'DimXpert', width: 66, latin: true },
  { label: '办公室产品', width: 76 },
  { label: 'Simulation', width: 73, latin: true },
];

// '-' is a rule, a trailing '>' adds a drop-down arrow
const rails = [
  {
    width: 13,
    clipped: true,
    items: 'mesh bar - monitor user sphere - gear dark blade leaf mark yellow - sphere printer - doc printer spark - greenDoc',
  },
  {
    width: 48,
    items:
      'sketchBend convert lofted - gFlange gMiter gHem gJog gBend gFold gBreak> forming - cut hole gVent - gUnfold gRefold gFlat gNoBend - rip insBend -',
  },
  {
    width: 48,
    items:
      'sExtrude sRevolve sSweep sLoft sBoundary sFill sPlanar sOffset sRuled sElbow sDelete sReplace sUntrim - gExtend gTrim gKnit fillet refGeom> curve>',
  },
  {
    width: 46,
    items: 'sk3d gWeld member gTrimEx boss gCap gusset weldBead cut wizard chamfer refGeom>',
  },
];

const managerTabs = ['part', 'props', 'config', 'dimx', 'ball'];

const tree = [
  { icon: 'sensor', label: '传感器' },
  { icon: 'annotation', label: '注解', open: true },
  { icon: 'cutlist', label: '切割清单(2)', open: true },
  { icon: 'equation', label: '方程式', open: true },
  { icon: 'material', label: 'Q235' },
  { icon: 'plane', label: '前视基准面' },
  { icon: 'plane', label: '上视基准面' },
  { icon: 'plane', label: '右视基准面' },
  { icon: 'origin', label: '原点' },
  { icon: 'weldment', label: '焊件' },
  { icon: 'extrude', label: '凸台-拉伸1', open: true },
  { icon: 'extrude', label: '凸台-拉伸4', open: true },
];

const viewTools = [
  ['zoomFit'],
  ['zoomArea'],
  ['prevView'],
  ['section'],
  ['orient', true],
  ['display', true],
  ['glasses', true],
  ['appearance'],
  ['scene', true],
  ['viewSet', true],
];

// ================= COMPONENTS =================

const RibbonBar = () => (
  <Ribbon>
    {ribbon.map((group, i) => (
      <Group key={i}>
        {group.big.map((c) => (
          <Command key={c.label} $width={c.width} $split={c.split}>
            <Icon name={c.icon} />
            <CommandLabel $latin={c.latin}>{c.label}</CommandLabel>
            {c.split && <CommandArrow />}
          </Command>
        ))}
        {group.stacks.map((stack, j) => (
          <Stack key={j} $width={stack.width}>
            {stack.items.map(([icon, label]) => (
              <StackCommand key={label}>
                <Icon name={icon} />
                {label}
              </StackCommand>
            ))}
          </Stack>
        ))}
      </Group>
    ))}
  </Ribbon>
);

const ToolRail = ({ width, items, clipped }) => (
  <Rail $width={width} $clipped={clipped}>
    <Grip />
    {items.split(' ').map((item, i) =>
      item === '-' ? (
        <RailRule key={i} />
      ) : (
        <RailRow key={i} $clipped={clipped}>
          <button aria-label={item.replace('>', '')}>
            <Icon name={item.replace('>', '')} />
          </button>
          {item.endsWith('>') && <Arrow $color={item === 'gBreak>' ? '#7b7e8c' : undefined} />}
        </RailRow>
      )
    )}
  </Rail>
);

const FeatureManager = () => {
  const [filter, setFilter] = useState('');
  return (
    <Manager>
      <ManagerTabs>
        {managerTabs.map((name, i) => (
          <ManagerTab key={name} $active={i === 0} aria-label={name}>
            <Icon name={name} />
          </ManagerTab>
        ))}
        <MoreButton aria-label="more">
          <svg width="10" height="9" viewBox="0 0 10 9" fill="none" stroke="#4a4d60" strokeWidth="1.200">
            <path d="M1 1l3.500 3.500L1 8M5.500 1L9 4.500 5.500 8" />
          </svg>
        </MoreButton>
      </ManagerTabs>
      <Filter>
        <FilterIcon>
          <svg width="13" height="13" viewBox="0 0 16 16">{icons.funnel}</svg>
        </FilterIcon>
        <FilterInput aria-label="filter" value={filter} onChange={(e) => setFilter(e.target.value)} />
      </Filter>
      <Tree>
        <RootRow>
          <Icon name="part" />
          <span>滑动架&nbsp;&nbsp;&nbsp;(默认&lt;按加工&gt;&lt;&lt;默认&gt;_显示状态 1&gt;)</span>
        </RootRow>
        {tree.map((node, i) => (
          <TreeRow key={node.label}>
            <Gutter $last={i === tree.length - 1}>{node.open && <Expander aria-label="expand" />}</Gutter>
            <Icon name={node.icon} />
            <TreeLabel>{node.label}</TreeLabel>
          </TreeRow>
        ))}
      </Tree>
    </Manager>
  );
};

const ModelScene = () => (
  <Scene viewBox="404 64 853 699" preserveAspectRatio="xMinYMin slice">
    <path
      d="M1154 117H1199L1194 123Q1191 132 1194 147Q1195 160 1199 167Q1205 181 1212 192Q1219 208 1229 223Q1241 243 1257 261V462Q1180 466 1110 464L1035 461L955 458L905 456Q850 445 775 442L745 440Q728 437 728 428Q729 418 746 412Q765 404 789 397Q815 390 842 379Q870 369 895 358Q922 346 949 332Q980 315 1005 298Q1030 282 1050 267Q1062 257 1071 247Q1086 228 1098 212Q1113 193 1126 178L1151 147Q1156 139 1157 134V122z"
      fill="#dde1ec"
    />
    <path d="M1168 110.500h19M1173 111.500h9" stroke="#dde1ec" strokeWidth="1" />
    <path
      d="M1172 247Q1183 246 1195 255Q1202 260 1208 270L1257 320V444Q1230 447 1197 449H1126L1055 444L984 438L940 432V400L1005 364L1037 348L1073 330Q1084 324 1094 315L1123 285L1144 262Q1154 247 1172 247z"
      fill="#d5d9e5"
    />

    <g strokeLinejoin="round">
      <path d="M632 515l108 10v3l-108-9z" fill="#8e9096" stroke="#0a0b0c" />
      <path d="M740 524l262-118v3L740 528z" fill="#55585b" stroke="#0a0b0c" strokeWidth="1.500" />
      <path d="M632 515L894 395l48 5-205 92v33z" fill="#3c3f42" stroke="#0a0b0c" strokeWidth="1.500" />
      <path d="M740 493l203-92V361l58-26v71L740 524z" fill="#3c3f42" stroke="#0a0b0c" strokeWidth="1.500" />
      <path d="M736 493l206-92M941 361l60-27" stroke="#08090a" strokeWidth="3" />
      <path d="M941 362v37" stroke="#9a9ca4" strokeWidth="1.500" />
      <path d="M940 361v39M943 362v38" stroke="#0a0b0c" strokeWidth="1.200" />
      <path d="M738 494v30" stroke="#9a9ca4" strokeWidth="1.500" />
      <path d="M736 494v30M740 493v34" stroke="#0a0b0c" strokeWidth="1.200" />
      <circle cx="735" cy="493" r="2" fill="#222" stroke="#000" />
    </g>
    <path
      d="M665 507l190-86M700 505l160-72M730 470l160-70M760 500l215-98M770 506l220-100M755 495l230-110M950 378l45-20M952 370l44-22"
      stroke="#34348a"
      strokeWidth="1"
      strokeDasharray="1 6 1 9"
    />

    <path d="M948.500 477.500v16l4-3.500 3 6 2.500-1-3-6h5z" fill="#f8f9fb" stroke="#1a1f3c" />

    {/* orientation triad */}
    <path d="M442.500 708h3v18h-3z" fill="#2438e8" />
    <path d="M439.500 709l4.500-11 4.500 11z" fill="#1c2f9c" />
    <path d="M428 724l16 2v3l-16-1.500z" fill="#0f6a18" />
    <path d="M417 726l10-4 2 3v5z" fill="#0c4a12" />
    <path d="M444 729l2-5 6-3 2 4z" fill="#6a1410" />
    <path d="M449 720l9 1-1 5-4 3z" fill="#e01c1c" />
    <g fontFamily="Liberation Serif, serif" fontSize="10">
      <text x="439" y="697" fill="#2438e8">Z</text>
      <text x="409" y="729" fill="#0f7a18">Y</text>
      <text x="453" y="724" fill="#e01c1c">X</text>
    </g>
  </Scene>
);

const App = () => {
  const [activeTab, setActiveTab] = useState('特征');
  return (
    <>
      <GlobalStyle />
      <Window>
        <RibbonBar />
        <Body>
          <SidePane>
            <Tabs>
              {tabs.map((t) => (
                <Tab
                  key={t.label}
                  $width={t.width}
                  $latin={t.latin}
                  $active={t.label === activeTab}
                  onClick={() => setActiveTab(t.label)}
                >
                  {t.label}
                </Tab>
              ))}
            </Tabs>
            <Workspace>
              {rails.map((rail) => (
                <ToolRail key={rail.items} {...rail} />
              ))}
              <FeatureManager />
            </Workspace>
          </SidePane>
          <Splitter>
            <SplitHandle aria-label="collapse panel">
              <HandleArrow />
              <HandleArrow />
              <HandleArrow />
            </SplitHandle>
          </Splitter>
          <Viewport>
            <ModelScene />
            <ViewTools>
              {viewTools.map(([name, arrow]) => (
                <ViewTool key={name} aria-label={name}>
                  <Icon name={name} />
                  {arrow && <ViewArrow $color="#5a6078" />}
                </ViewTool>
              ))}
            </ViewTools>
          </Viewport>
        </Body>
      </Window>
    </>
  );
};

export default App;
